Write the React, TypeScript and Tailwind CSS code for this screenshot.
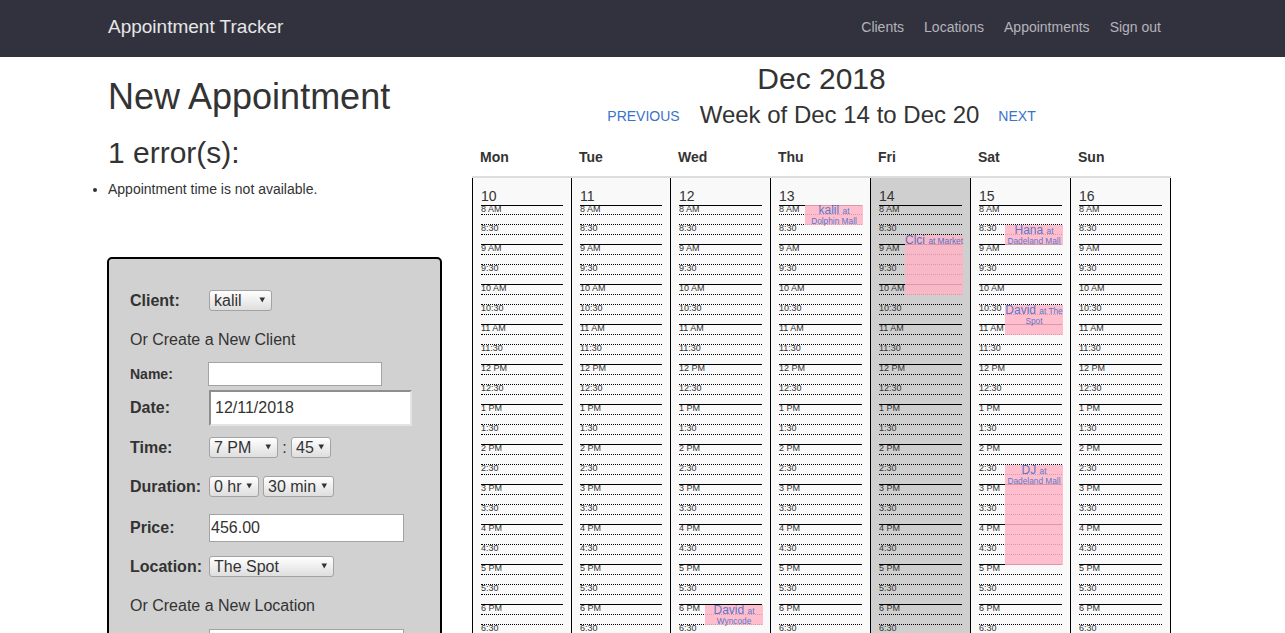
import React from 'react';

const days = [
  { name: 'Mon', date: 10 },
  { name: 'Tue', date: 11 },
  { name: 'Wed', date: 12 },
  { name: 'Thu', date: 13 },
  { name: 'Fri', date: 14 },
  { name: 'Sat', date: 15 },
  { name: 'Sun', date: 16 },
];

const slots = [
  '8 AM', '8:30', '9 AM', '9:30', '10 AM', '10:30', '11 AM', '11:30', '12 PM', '12:30',
  '1 PM', '1:30', '2 PM', '2:30', '3 PM', '3:30', '4 PM', '4:30', '5 PM', '5:30',
  '6 PM', '6:30', '7 PM', '7:30',
];

// top is measured from the 8 AM line, height is 10px per quarter row
const events: Record<number, { who: string; where: string; top: number; height: number }[]> = {
  12: [{ who: 'David', where: 'at Wyncode', top: 400, height: 20 }],
  13: [{ who: 'kalil', where: 'at Dolphin Mall', top: 0, height: 20 }],
  14: [{ who: 'Clci', where: 'at Market', top: 30, height: 60 }],
  15: [
    { who: 'Hana', where: 'at Dadeland Mall', top: 20, height: 20 },
    { who: 'David', where: 'at The Spot', top: 100, height: 30 },
    { who: 'DJ', where: 'at Dadeland Mall', top: 260, height: 100 },
  ],
};

const gridCols = 'grid grid-cols-[99px_99px_100px_100px_100px_100px_101px]';

function Select({ value, width, options }: { value: string; width: string; options: string[] }) {
  return (
    <div className={`relative h-[21px] ${width}`}>
      <select
        defaultValue={value}
        className="appearance-none w-full h-full pl-[4px] text-base leading-none border border-[#a3a3a3] rounded-[3px] bg-gradient-to-b from-white to-[#dedede] text-[#333]"
      >
        {options.map((o) => (
          <option key={o}>{o}</option>
        ))}
      </select>
      <svg className="absolute right-[6px] top-[7px] pointer-events-none" width="7" height="6" viewBox="0 0 7 6">
        <path d="M0.5 0.5 H6 L3.25 5.5 Z" fill="#333" />
      </svg>
    </div>
  );
}

function DayCell({ date, last }: { date: number; last: boolean }) {
  return (
    <div
      className={`border-l border-black pt-2 pl-2 pr-2 ${last ? 'border-r' : ''} ${
        date === 14 ? 'bg-[#cfcfcf]' : 'bg-[#f9f9f9]'
      }`}
    >
      <div className="h-[19px] text-sm leading-[20px]">{date}</div>
      <div className="relative">
        {slots.map((label, i) => (
          <div key={label}>
            <div
              className={`${i === 0 ? 'h-[9px]' : 'h-[10px]'} border-t border-black text-[9px] leading-[6px] whitespace-nowrap ${
                label.includes('M') ? 'border-solid' : 'border-dotted'
              }`}
            >
              {label}
            </div>
            <div className="h-[10px] border-t border-dotted border-black" />
          </div>
        ))}
        {(events[date] || []).map((e) => (
          <div
            key={e.who}
            className="absolute left-[26px] w-[58px] bg-[#ffb4c7] opacity-85 text-center text-xs leading-[10px] text-[#3f62c0]"
            style={{ top: e.top, height: e.height }}
          >
            {e.who} <span className="text-[8.3px] leading-[8px]">{e.where}</span>
          </div>
        ))}
      </div>
    </div>
  );
}

export default function App() {
  return (
    <div className="h-screen overflow-hidden bg-white text-[#333] text-sm font-['Liberation_Sans',Arial,sans-serif]">
      {/* Navbar */}
      <nav className="h-[57px] bg-[#32323f] flex items-center justify-between pl-[108px] pr-[124px] pb-1">
        <span className="text-[19px] text-[#e6e6e6]">Appointment Tracker</span>
        <div className="flex gap-5 text-[#b4b4ba]">
          <span>Clients</span>
          <span>Locations</span>
          <span>Appointments</span>
          <span>Sign out</span>
        </div>
      </nav>

      <div className="flex gap-[30px] pl-[107px]">
        {/* Form column */}
        <div className="w-[335px] shrink-0">
          <h1 className="mt-5 text-[36px] leading-[40px] pl-[1px]">New Appointment</h1>
          <h2 className="mt-[19px] text-[30px] leading-[33px] pl-[1px]">1 error(s):</h2>
          <ul className="mt-[10px] list-disc pl-[1px]">
            <li className="leading-5">Appointment time is not available.</li>
          </ul>

          <form className="mt-[58px] h-[460px] border-2 border-black rounded-[5px] bg-[#d1d1d1] pl-[21px] pt-[31px]">
            <div className="flex items-center">
              <label className="w-[79px] text-base leading-none font-bold">Client:</label>
              <Select value="kalil" width="w-[63px]" options={['kalil', 'David', 'Hana', 'Clci', 'DJ']} />
            </div>
            <p className="mt-[17px] text-base leading-6">Or Create a New Client</p>
            <div className="mt-[10px] flex items-center">
              <label className="w-[78px] leading-none font-bold">Name:</label>
              <input className="w-[174px] h-6 bg-white border border-[#a3a3a3]" />
            </div>
            <div className="mt-1 flex items-center">
              <label className="w-[79px] text-base leading-none font-bold">Date:</label>
              <input
                defaultValue="12/11/2018"
                className="w-[203px] h-[36px] pl-[4px] text-base bg-white border-2 border-t-[#8e8e8e] border-l-[#8e8e8e] border-r-[#e4e4e4] border-b-[#e4e4e4]"
              />
            </div>
            <div className="mt-[11px] flex items-center">
              <label className="w-[79px] text-base leading-none font-bold">Time:</label>
              <Select value="7 PM" width="w-[69px]" options={['7 PM']} />
              <span className="mx-[4px] w-[5px] text-base leading-none text-center">:</span>
              <Select value="45" width="w-[40px]" options={['45']} />
            </div>
            <div className="mt-[18px] flex items-center gap-1">
              <label className="w-[75px] text-base leading-none font-bold whitespace-nowrap">Duration:</label>
              <Select value="0 hr" width="w-[50px]" options={['0 hr']} />
              <Select value="30 min" width="w-[71px]" options={['30 min']} />
            </div>
            <div className="mt-[17px] flex items-center">
              <label className="w-[79px] text-base leading-none font-bold">Price:</label>
              <input
                defaultValue="456.00"
                className="w-[195px] h-[28px] pl-[1px] text-base bg-white border border-[#a3a3a3]"
              />
            </div>
            <div className="mt-[14px] flex items-center">
              <label className="w-[79px] text-base leading-none font-bold">Location:</label>
              <Select value="The Spot" width="w-[125px]" options={['The Spot']} />
            </div>
            <p className="mt-[17px] text-base leading-6">Or Create a New Location</p>
            <div className="mt-[11px] flex items-center">
              <label className="w-[79px] leading-none font-bold">Name:</label>
              <input className="w-[195px] h-6 bg-white border border-[#a3a3a3]" />
            </div>
          </form>
        </div>

        {/* Calendar column */}
        <div className="w-[699px] shrink-0">
          <div className="pt-[5px] text-center text-[30px] leading-[33px]">Dec 2018</div>
          <div className="mt-[3px] h-[33px] flex items-center justify-center gap-5">
            <span className="mt-[2px] text-[#3b73c9]">PREVIOUS</span>
            <span className="text-2xl">Week of Dec 14 to Dec 20</span>
            <span className="mt-[2px] -ml-[1px] text-[#3b73c9]">NEXT</span>
          </div>
          <div className={`mt-[15px] h-[32px] pt-[1px] border-b-2 border-[#ddd] ${gridCols}`}>
            {days.map((d) => (
              <div key={d.name} className="pl-2 font-bold leading-5">
                {d.name}
              </div>
            ))}
          </div>
          <div className={gridCols}>
            {days.map((d, i) => (
              <DayCell key={d.name} date={d.date} last={i === 6} />
            ))}
          </div>
        </div>
      </div>
    </div>
  );
}
